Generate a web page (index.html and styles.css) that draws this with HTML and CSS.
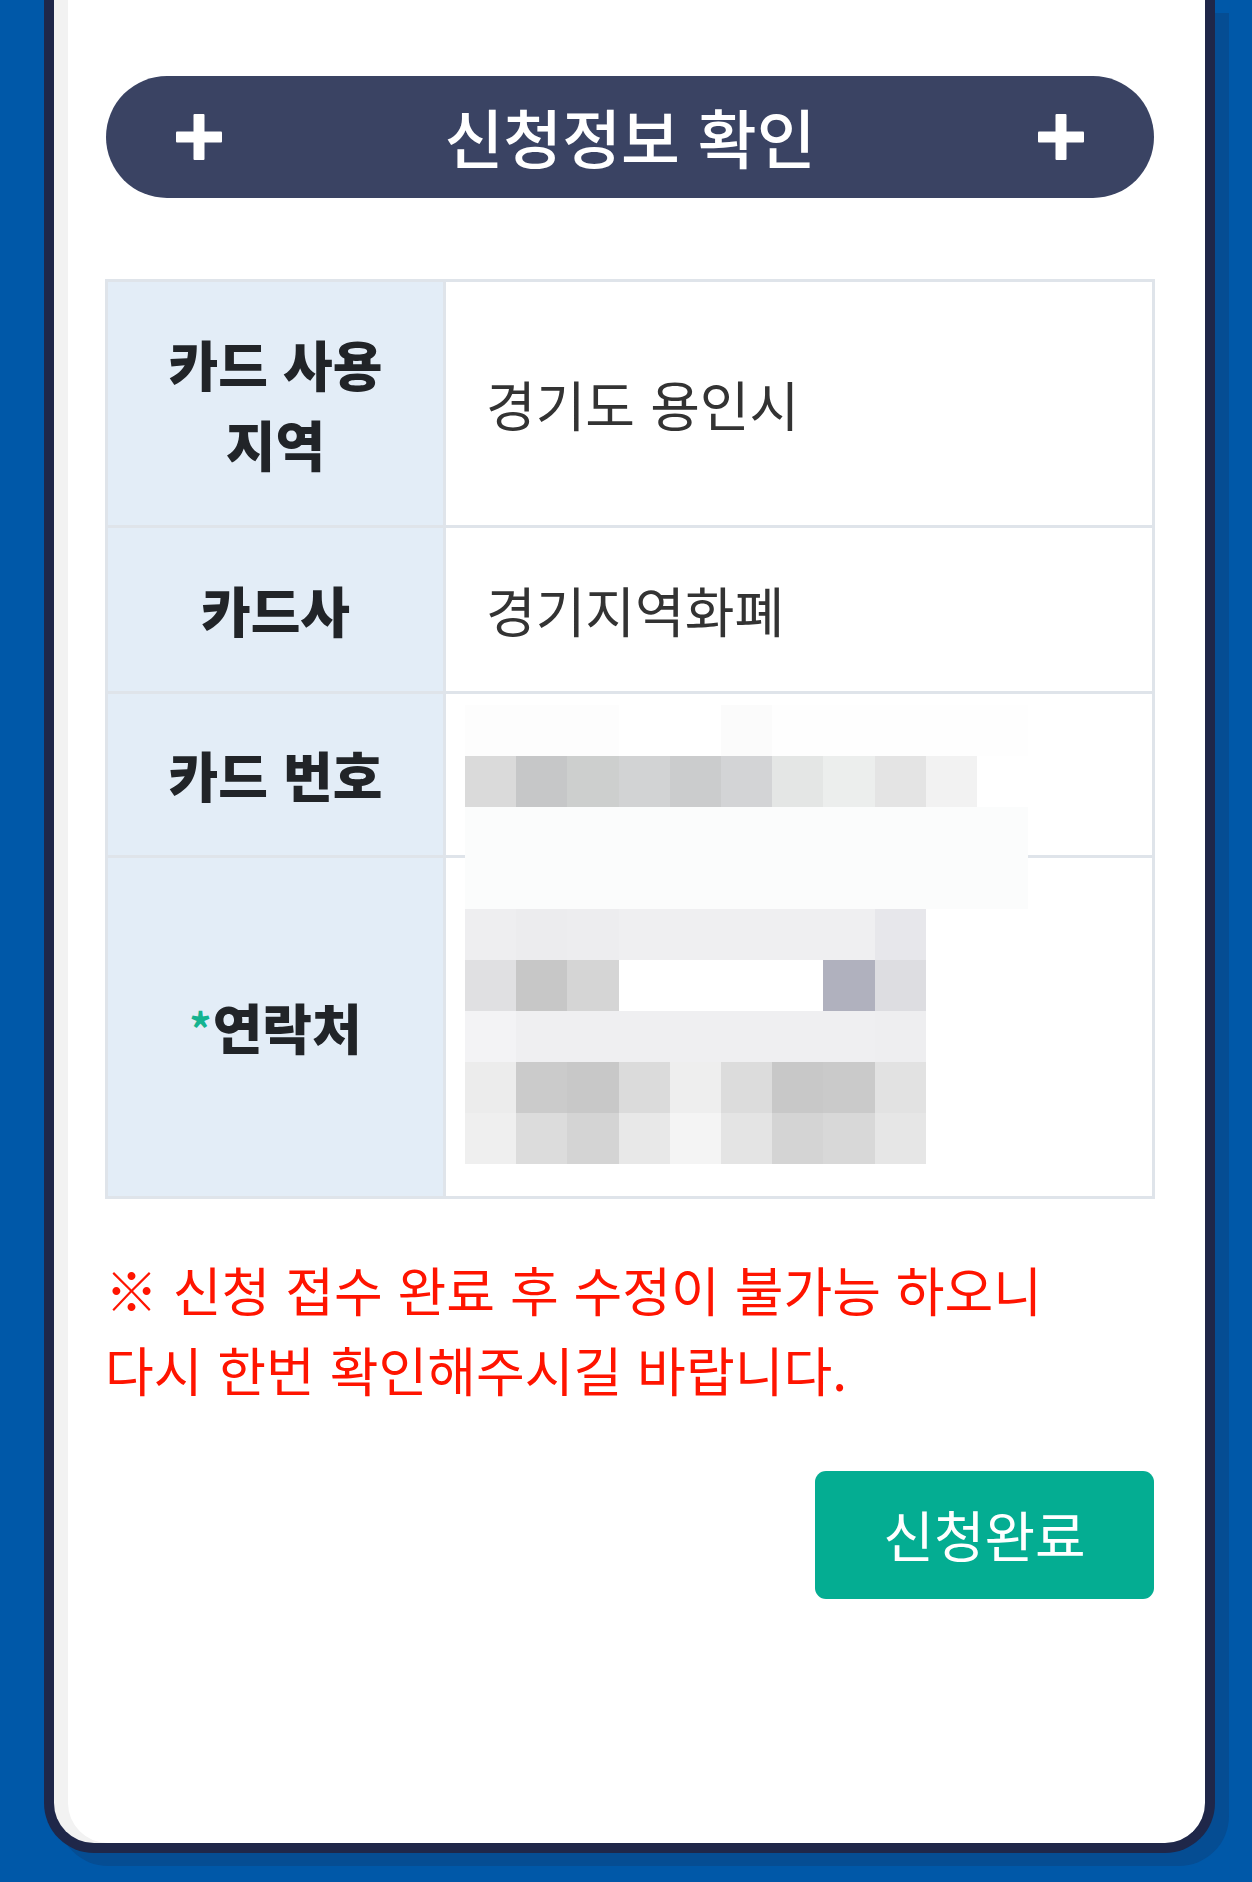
FILE: index.html
```html
<!DOCTYPE html>
<html lang="ko">
<head>
<meta charset="utf-8">
<title>신청정보 확인</title>
<link rel="stylesheet" href="styles.css">
</head>
<body>
<div class="page">
  <div class="card">
    <div class="title-bar">
      <svg class="plus" viewBox="0 0 46 46" aria-hidden="true"><rect x="17.5" y="0" width="11" height="46" rx="1"/><rect x="0" y="17.5" width="46" height="11" rx="1"/></svg>
      <h1 class="title">신청정보 확인</h1>
      <svg class="plus" viewBox="0 0 46 46" aria-hidden="true"><rect x="17.5" y="0" width="11" height="46" rx="1"/><rect x="0" y="17.5" width="46" height="11" rx="1"/></svg>
    </div>

    <div class="info">
      <div class="info-grid">
        <div class="label">카드 사용<br>지역</div>
        <div class="value">경기도 용인시</div>
        <div class="label">카드사</div>
        <div class="value">경기지역화폐</div>
        <div class="label">카드 번호</div>
        <div class="value"></div>
        <div class="label"><span class="req">*</span>연락처</div>
        <div class="value"></div>
      </div>
      <div class="mosaic" aria-hidden="true">
        <i class="p-fd"></i><i class="p-fd"></i><i class="p-fd"></i><i></i><i></i><i class="p-fc"></i><i class="p-fe"></i><i class="p-fe"></i><i class="p-fe"></i><i class="p-fe"></i><i class="p-fe"></i>
        <i class="p-da"></i><i class="p-c6"></i><i class="p-cd"></i><i class="p-d2"></i><i class="p-cb"></i><i class="p-d3"></i><i class="p-e4g"></i><i class="p-ec"></i><i class="p-e4"></i><i class="p-f2"></i><i></i>
        <i class="p-fb"></i><i class="p-fb"></i><i class="p-fb"></i><i class="p-fb"></i><i class="p-fb"></i><i class="p-fb"></i><i class="p-fb"></i><i class="p-fb"></i><i class="p-fb"></i><i class="p-fb"></i><i class="p-fb"></i>
        <i class="p-fb"></i><i class="p-fb"></i><i class="p-fb"></i><i class="p-fb"></i><i class="p-fb"></i><i class="p-fb"></i><i class="p-fb"></i><i class="p-fb"></i><i class="p-fb"></i><i class="p-fb"></i><i class="p-fb"></i>
        <i class="p-ee"></i><i class="p-ecb"></i><i class="p-edb"></i><i class="p-efb"></i><i class="p-efb"></i><i class="p-efb"></i><i class="p-efb"></i><i class="p-efb"></i><i class="p-e7"></i><i></i><i></i>
        <i class="p-e0"></i><i class="p-c7"></i><i class="p-d5"></i><i class="p-ff"></i><i class="p-ff"></i><i class="p-ff"></i><i class="p-ff"></i><i class="p-b0"></i><i class="p-dd"></i><i></i><i></i>
        <i class="p-f3"></i><i class="p-efb"></i><i class="p-efb"></i><i class="p-efb"></i><i class="p-efb"></i><i class="p-efb"></i><i class="p-efb"></i><i class="p-efb"></i><i class="p-ee"></i><i></i><i></i>
        <i class="p-ecg"></i><i class="p-cbg"></i><i class="p-c8"></i><i class="p-db"></i><i class="p-eeg"></i><i class="p-dc"></i><i class="p-c8"></i><i class="p-ca"></i><i class="p-e2"></i><i></i><i></i>
        <i class="p-efg"></i><i class="p-dc"></i><i class="p-d4"></i><i class="p-e8"></i><i class="p-f4"></i><i class="p-e4"></i><i class="p-d4"></i><i class="p-d8"></i><i class="p-e6"></i><i></i><i></i>
      </div>
    </div>

    <p class="notice">※ 신청 접수 완료 후 수정이 불가능 하오니<br>다시 한번 확인해주시길 바랍니다.</p>

    <div class="actions">
      <button class="submit" type="button">신청완료</button>
    </div>
  </div>
</div>
</body>
</html>
```

FILE: styles.css
```css
html, body {
  margin: 0;
  padding: 0;
}

body {
  background: #0058a8;
  font-family: "Noto Sans CJK KR", "Noto Sans", sans-serif;
  width: 1252px;
  height: 1882px;
  overflow: hidden;
}

.page {
  padding-left: 44px;
}

.card {
  box-sizing: border-box;
  width: 1171px;
  height: 1853px;
  background: #ffffff;
  border: 10px solid #1f2749;
  border-top: 0;
  border-radius: 0 0 50px 50px;
  box-shadow: inset 14px 0 0 #f2f2f2, 14px 13px 0 #054d93;
  padding: 76px 50px 0 51px;
}

.title-bar {
  height: 122px;
  margin: 0 1px;
  border-radius: 61px;
  background: #3a4363;
  display: flex;
  align-items: center;
  justify-content: space-between;
  padding: 0 70px;
}

.plus {
  width: 46px;
  height: 46px;
  fill: #ffffff;
  flex: none;
}

.title {
  margin: 0;
  color: #ffffff;
  font-size: 64px;
  font-weight: 500;
  line-height: 1;
  padding-bottom: 4px;
}

.info {
  position: relative;
  margin-top: 81px;
}

.info-grid {
  display: grid;
  grid-template-columns: 335px 1fr;
  grid-template-rows: 243px 163px 161px 338px;
  gap: 3px;
  padding: 3px;
  background: #dfe4ea;
}

.label {
  background: #e3edf7;
  color: #212428;
  font-size: 54px;
  font-weight: 900;
  line-height: 80px;
  display: flex;
  align-items: center;
  justify-content: center;
  text-align: center;
}

.value {
  background: #ffffff;
  color: #333333;
  font-size: 54px;
  font-weight: 400;
  display: flex;
  align-items: center;
  padding-left: 40px;
}

.req {
  color: #14b390;
  font-size: 44px;
  font-weight: 700;
  margin-right: 1px;
}

.mosaic {
  position: absolute;
  top: 426px;
  left: 360px;
  display: grid;
  grid-template-columns: repeat(11, 51.2px);
  grid-auto-rows: 51px;
}

.mosaic i { display: block; }

.p-fd { background: #fdfdfd; }
.p-fc { background: #fbfbfb; }
.p-fe { background: #fefefe; }
.p-da { background: #dadada; }
.p-c6 { background: #c6c7c8; }
.p-cd { background: #cdcfce; }
.p-d2 { background: #d2d3d4; }
.p-cb { background: #cbcccd; }
.p-d3 { background: #d3d4d6; }
.p-e4g { background: #e4e6e5; }
.p-ec { background: #eceeed; }
.p-e4 { background: #e4e4e4; }
.p-f2 { background: #f2f2f2; }
.p-fb { background: #fbfcfc; }
.p-ee { background: #eeeef0; }
.p-ecb { background: #ececee; }
.p-edb { background: #ededef; }
.p-efb { background: #efeff1; }
.p-e7 { background: #e7e7eb; }
.p-e0 { background: #e0e0e2; }
.p-c7 { background: #c7c7c7; }
.p-d5 { background: #d5d5d5; }
.p-ff { background: #ffffff; }
.p-b0 { background: #b0b1be; }
.p-dd { background: #dddde1; }
.p-f3 { background: #f3f3f5; }
.p-ecg { background: #ececec; }
.p-cbg { background: #cbcbcb; }
.p-c8 { background: #c8c8c8; }
.p-db { background: #dbdbdb; }
.p-eeg { background: #eeeeee; }
.p-dc { background: #dcdcdc; }
.p-ca { background: #cacaca; }
.p-e2 { background: #e2e2e2; }
.p-efg { background: #efefef; }
.p-d4 { background: #d4d4d4; }
.p-e8 { background: #e8e8e8; }
.p-f4 { background: #f4f4f4; }
.p-d8 { background: #d8d8d8; }
.p-e6 { background: #e6e6e6; }

.notice {
  margin: 50px 0 0 0;
  color: #ff1400;
  font-size: 53px;
  line-height: 80px;
  font-weight: 400;
}

.actions {
  display: flex;
  justify-content: flex-end;
  margin-top: 62px;
  padding-right: 1px;
}

.submit {
  width: 339px;
  height: 128px;
  border: 0;
  border-radius: 11px;
  background: #04ad92;
  color: #ffffff;
  font-family: "Noto Sans CJK KR", "Noto Sans", sans-serif;
  font-size: 55px;
  font-weight: 400;
  padding: 0 0 4px;
}
```
